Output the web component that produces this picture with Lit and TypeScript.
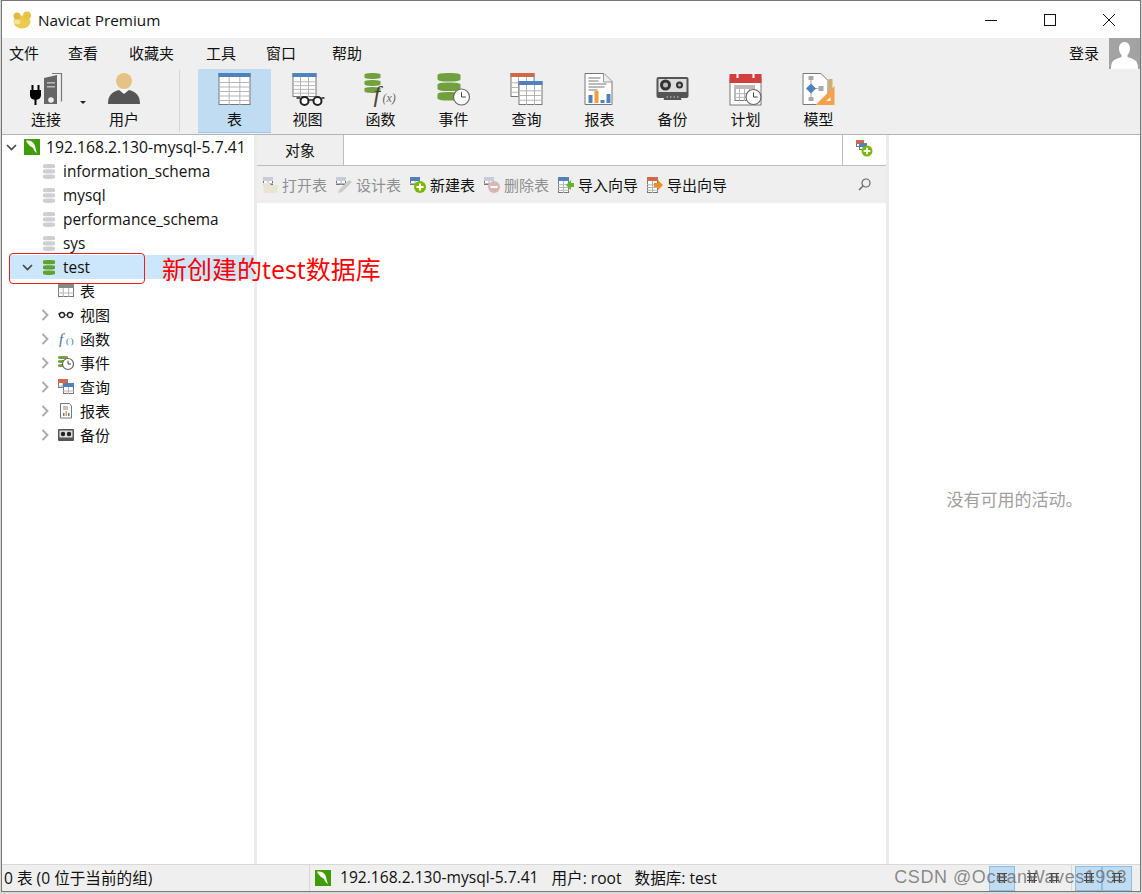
import { LitElement, html, css, svg } from "lit";
import { customElement } from "lit/decorators.js";

const gridTable = (x: number, y: number, w: number, h: number, head: string, cols: number, rows: number, sw = 1) => {
  const cw = w / cols, rh = (h - 5) / rows;
  const lines = [];
  for (let i = 1; i < cols; i++) lines.push(svg`<path d="M${x + cw * i} ${y}v${h}" stroke="#b5b5b5" stroke-width="1"/>`);
  for (let i = 1; i < rows; i++) lines.push(svg`<path d="M${x} ${y + 5 + rh * i}h${w}" stroke="#b5b5b5" stroke-width="1"/>`);
  return svg`<rect x="${x + .5}" y="${y + .5}" width="${w - 1}" height="${h - 1}" fill="#fff" stroke="#777" stroke-width="${sw}"/>${lines}<rect x="${x}" y="${y}" width="${w}" height="4" fill="${head}"/>`;
};
const dbStack = (x: number, y: number, w: number, hh: number, fill: string) => svg`
  <rect x="${x}" y="${y}" width="${w}" height="${hh}" rx="${w / 2.4}" ry="${hh * .24}" fill="${fill}"/>
  <rect x="${x}" y="${y + hh + 1}" width="${w}" height="${hh}" rx="${w / 2.4}" ry="${hh * .24}" fill="${fill}"/>
  <rect x="${x}" y="${y + 2 * hh + 2}" width="${w}" height="${hh}" rx="${w / 2.4}" ry="${hh * .24}" fill="${fill}"/>`;
const clock = (cx: number, cy: number, r: number) => svg`
  <circle cx="${cx}" cy="${cy}" r="${r}" fill="#fff" stroke="#666" stroke-width="1.2"/>
  <path d="M${cx} ${cy - r * .6}V${cy}h${r * .55}" fill="none" stroke="#444" stroke-width="1"/>`;
const greenPlus = (cx: number, cy: number, r: number) => svg`
  <circle cx="${cx}" cy="${cy}" r="${r}" fill="#7ab800"/>
  <path d="M${cx - r * .6} ${cy}h${r * 1.2}M${cx} ${cy - r * .6}v${r * 1.2}" stroke="#fff" stroke-width="${r * .35}"/>`;

const dolphin = html`<svg width="16" height="16" viewBox="0 0 16 16"><rect width="16" height="16" fill="#3f9c06"/><path d="M2 1.500c4-.5 7 1 8.500 4 1 2 1 5 2.500 8.500-2-1-3-3-4-5-1-1.500-2.500-1-3.500-2.500C4.500 5 3 4 2 1.500z" fill="#fff"/></svg>`;
const dbIcon = (c: string) => html`<svg width="14" height="16" viewBox="0 0 14 16">${dbStack(1, 1, 12, 4.300, c)}</svg>`;
const chevDown = html`<svg width="11" height="7"><path d="M1 1l4.500 4.500L10 1" fill="none" stroke="#444" stroke-width="1.600"/></svg>`;

const big: Record<string, unknown> = {
  conn: svg`<path d="M22 .5h9.500v28" fill="none" stroke="#777" stroke-width="1.200"/><path d="M14 5l13-3v29H14z" fill="#666"/><rect x="17" y="9" width="8" height="1.500" fill="#bbb"/><rect x="17" y="13" width="8" height="1.500" fill="#bbb"/><circle cx="21" cy="27" r="2.800" fill="#eee"/>
    <path d="M2.500 12v6M8.500 12v6" stroke="#000" stroke-width="2"/><path d="M0 17h11v5c0 3-2 4.500-4.500 4.800V32h-2v-5.200C2 26.500 0 25 0 22z" fill="#000"/>`,
  user: svg`<circle cx="16" cy="8" r="8" fill="#e6c384"/><path d="M0 31c0-9 4-12 11-14l5 4 5-4c7 2 11 5 11 14z" fill="#555"/><path d="M12 16l4 4 4-4z" fill="#fff"/>`,
  table: svg`${gridTable(0, 0, 32, 32, "#4f81bd", 3, 6)}`,
  view: svg`${gridTable(1, 0, 24, 24, "#4f81bd", 3, 5)}<path d="M5 25h4M30 25h3" stroke="#222" stroke-width="1.500"/><circle cx="13" cy="28" r="4" fill="#fff" stroke="#222" stroke-width="2"/><circle cx="26" cy="28" r="4" fill="#fff" stroke="#222" stroke-width="2"/><path d="M17 27h5" stroke="#222" stroke-width="1.500"/>`,
  func: svg`${dbStack(0, 0, 16, 6, "#72a03e")}<text x="9" y="29" font-family="Liberation Serif" font-style="italic" font-size="24" fill="#444">f</text><text x="18" y="29" font-family="Liberation Serif" font-style="italic" font-size="12" fill="#666">(x)</text>`,
  event: svg`${dbStack(0, 0, 23, 8.500, "#72a03e")}${clock(24, 24, 8)}`,
  query: svg`${gridTable(0, 0, 24, 24, "#d0694a", 3, 4)}${gridTable(8, 8, 24, 24, "#4f81bd", 3, 4)}`,
  report: svg`<path d="M1.500.5h19l8 8v23h-27z" fill="#fff" stroke="#777"/><path d="M20 .5v8.500h8.500" fill="#eee" stroke="#999"/><path d="M5 5h12M5 8h10M5 11h18M5 14h16M5 17h9" stroke="#777"/><rect x="5" y="22" width="4" height="8" fill="#4f81bd"/><rect x="11" y="18" width="4" height="12" fill="#f59c3c"/><rect x="17" y="27" width="4" height="3" fill="#4f81bd"/><rect x="23" y="21" width="4" height="9" fill="#4f81bd"/>`,
  backup: svg`<rect x="0" y="4" width="32" height="21" rx="2" fill="#555"/><rect x="2" y="6" width="28" height="13" fill="#ddd"/><circle cx="9" cy="12" r="5.500" fill="#333"/><circle cx="9" cy="12" r="2.500" fill="#bbb"/><circle cx="23" cy="12" r="3.500" fill="#333"/><circle cx="23" cy="12" r="1.500" fill="#bbb"/><path d="M7 27l2-7h14l2 7z" fill="#555"/><path d="M10 24h12" stroke="#ccc" stroke-dasharray="1.500 2"/>`,
  plan: svg`<rect x=".5" y="5" width="31" height="27" fill="#fff" stroke="#777"/><rect y="1" width="32" height="9" fill="#d13f3f"/><path d="M8 0v5M24 0v5" stroke="#fff" stroke-width="2"/>${gridTable(5, 12, 20, 16, "#bbb", 4, 3)}${clock(24, 24, 7.500)}`,
  model: svg`<path d="M.5.500h18l7 7V31.500H.500z" fill="#fff" stroke="#777"/><rect x="26" y="6" width="4" height="18" fill="#cfae75"/><rect x="6" y="3" width="5" height="4" fill="#aaa"/><rect x="6" y="24" width="5" height="4" fill="#aaa"/><rect x="16" y="13" width="5" height="5" fill="#aaa"/><path d="M8.500 7v17M12 15.500h4" stroke="#aaa"/><path d="M8.500 10.500l5 5-5 5-5-5z" fill="#4f81bd"/><path d="M32 13v19H13z" fill="#f5a04c"/><path d="M28 24v4h-4z" fill="#fff"/>`,
};

const sm: Record<string, unknown> = {
  table: svg`${gridTable(0, 1, 16, 13, "#888", 3, 2)}`,
  view: svg`<circle cx="4" cy="8" r="2.500" fill="#fff" stroke="#222" stroke-width="1.300"/><circle cx="12" cy="8" r="2.500" fill="#fff" stroke="#222" stroke-width="1.300"/><path d="M6.500 8h3M0 7h1.500M14.500 7H16" stroke="#222"/>`,
  func: svg`<text x="1" y="13" font-family="Liberation Serif" font-style="italic" font-size="15" fill="#3f6f9f">f</text><text x="8" y="13" font-family="Liberation Serif" font-size="9" letter-spacing="1.500" fill="#3f6f9f">()</text>`,
  event: svg`${dbStack(0, 1, 10, 3, "#72a03e")}${clock(10, 9, 5.500)}`,
  query: svg`${gridTable(0, 0, 10, 9, "#d0694a", 2, 2)}${gridTable(5, 4, 11, 11, "#4f81bd", 2, 2)}`,
  report: svg`<path d="M2.500.5h9l2 2.500v12h-11z" fill="#fff" stroke="#777"/><path d="M5 4h5M5 6h5" stroke="#888"/><rect x="5" y="10" width="1.500" height="3" fill="#4f81bd"/><rect x="7.500" y="8" width="1.500" height="5" fill="#f59c3c"/><rect x="10" y="10" width="1.500" height="3" fill="#4f81bd"/>`,
  backup: svg`<rect x="0" y="2" width="16" height="12" rx="1" fill="#555"/><rect x="1.500" y="3.500" width="13" height="7" fill="#ddd"/><circle cx="5" cy="7" r="2.200" fill="#222"/><circle cx="11" cy="7" r="2.200" fill="#222"/>`,
  open: svg`${gridTable(1, 0, 10, 8, "#c6cdd8", 2, 2)}<path d="M1 6h6l2 2h7l-1 8H2z" fill="#e9e4d3"/>`,
  design: svg`${gridTable(0, 0, 10, 8, "#c6cdd8", 2, 2)}<path d="M3 13L13 3l3 2L6 15l-4 1z" fill="#ccc"/>`,
  create: svg`${gridTable(0, 0, 10, 8, "#4f81bd", 2, 2)}${greenPlus(10, 10, 6)}`,
  del: svg`${gridTable(0, 0, 10, 8, "#c6cdd8", 2, 2)}<circle cx="10" cy="10" r="6" fill="#dcb5b5"/><path d="M6.500 10h7" stroke="#fff" stroke-width="2"/>`,
  imp: svg`${gridTable(0, 0, 11, 16, "#4f81bd", 2, 4)}<path d="M8 8l5-5v3h3v4h-3v3z" fill="#65b32e"/>`,
  exp: svg`${gridTable(0, 0, 11, 16, "#d0694a", 2, 4)}<path d="M16 8l-5-5v3H7v4h4v3z" fill="#f28c1e"/>`,
};

const gl = html`<svg width="12" height="12" viewBox="0 0 12 12"><path d="M1 1.500h10M1 5h10M1 8.500h10M3.500 1v10M8.500 1v10" stroke="#444" stroke-width="1.200" fill="none"/></svg>`;

const menus: [string, number][] = [["文件", 0], ["查看", 29], ["收藏夹", 31], ["工具", 32], ["窗口", 30], ["帮助", 36]];
const tools: [string, string, boolean?][] = [["表", "table", true], ["视图", "view"], ["函数", "func"], ["事件", "event"], ["查询", "query"], ["报表", "report"], ["备份", "backup"], ["计划", "plan"], ["模型", "model"]];
const objs: [string, string, boolean][] = [["打开表", "open", false], ["设计表", "design", false], ["新建表", "create", true], ["删除表", "del", false], ["导入向导", "imp", true], ["导出向导", "exp", true]];
const dbs = ["information_schema", "mysql", "performance_schema", "sys"];
const kids: [string, string, boolean][] = [["表", "table", false], ["视图", "view", true], ["函数", "func", true], ["事件", "event", true], ["查询", "query", true], ["报表", "report", true], ["备份", "backup", true]];

@customElement("app-root")
export class AppRoot extends LitElement {
  static styles = css`
    :host { display: block; width: 1142px; height: 894px; background: #d8d8d8; overflow: hidden; position: relative;
      font-family: "Open Sans", "Noto Sans CJK SC", sans-serif; color: #111; font-size: 15px; }
    .win { position: absolute; inset: 1px 2px 3px 2px; background: #fff; display: flex; flex-direction: column;
      box-shadow: 0 0 0 1px #777; }
    .title { height: 37px; display: flex; align-items: center; padding-left: 10px; flex: none; }
    .title span { margin-left: 6px; font-size: 15.300px; }
    .caps { margin-left: auto; margin-right: 2px; display: flex; }
    .cap { width: 59px; height: 37px; display: flex; align-items: center; justify-content: center; }
    .menu { height: 30px; flex: none; background: #efefef; display: flex; align-items: center; padding-left: 7px; position: relative; }
    .menu span { position: relative; top: -1px; }
    .menu .login { margin-left: auto; margin-right: 10px; }
    .avatar { width: 31px; height: 31px; background: #a3a3a3; overflow: hidden; align-self: flex-start; }
    .tb { height: 67px; flex: none; background: #efefef; border-bottom: 1px solid #b4b4b4; display: flex; padding: 1px 0 0 4px; box-sizing: border-box; }
    .tool { width: 73px; height: 64px; display: flex; flex-direction: column; align-items: center; padding-top: 4px; box-sizing: border-box; flex: none; }
    .tool.on { background: #bfdcf2; border-bottom: 1px solid #9cc8ea; }
    .tool svg { display: block; flex: none; overflow: visible; }
    .tool span { margin-top: 2px; line-height: 20px; }
    .tool.user { width: 76px; }
    .sep { width: 1px; height: 62px; background: #d6d6d6; margin: 1px 18px 0 17px; flex: none; }
    .tool.conn { position: relative; width: 80px; }
    .caret { position: absolute; left: 74px; top: 32px; width: 0; height: 0; border: 3px solid transparent; border-top: 3px solid #222; }
    .main { flex: 1; display: flex; min-height: 0; }
    .tree { width: 252px; flex: none; box-sizing: border-box; }
    .gap { width: 3px; background: #ececec; flex: none; }
    .row { height: 24px; display: flex; align-items: center; box-sizing: border-box; white-space: nowrap; font-size: 15.400px; }
    .arrow { width: 14px; flex: none; display: flex; justify-content: center; }
    .row.root { padding-left: 2px; font-size: 15.700px; }
    .row.root .dl { margin-left: 6px; display: flex; }
    .row.root .lbl { margin-left: 6px; }
    .row.db { padding-left: 40px; }
    .row.db .lbl, .row.sel .lbl { margin-left: 7px; }
    .row.sel { background: #cce6fb; margin-left: 7px; padding-left: 11px; }
    .row.sel svg.db { margin-left: 8px; }
    .row.kid { padding-left: 36px; font-size: 15px; }
    .row.kid .ic { margin-left: 6px; margin-right: 6px; display: block; }
    .row.kid .kl { position: relative; top: -1px; }
    .center { flex: 1; display: flex; flex-direction: column; min-width: 0; }
    .tabs { height: 31px; flex: none; display: flex; border-bottom: 1px solid #bdbdbd; box-sizing: border-box; }
    .tab { width: 87px; background: #efefef; border-right: 1px solid #bdbdbd; display: flex; align-items: center; justify-content: center; box-sizing: border-box; height: 30px; padding-bottom: 2px; }
    .tabs .fill { flex: 1; }
    .tabs .add { width: 44px; border-left: 1px solid #bdbdbd; display: flex; justify-content: center; padding-top: 5px; box-sizing: border-box; }
    .otb { height: 37px; flex: none; background: #efefef; display: flex; align-items: center; padding-left: 5px; }
    .ob { display: flex; align-items: center; gap: 4px; margin-right: 9px; color: #909090; white-space: nowrap; }
    .ob.en { color: #111; }
    .search { margin-left: auto; margin-right: 15px; display: block; }
    .blank { flex: 1; }
    .right { width: 251px; flex: none; border-left: 3px solid #ececec; display: flex; align-items: center; justify-content: center; color: #a0a0a0; font-size: 17px; box-sizing: content-box; padding-bottom: 2px; }
    .status { height: 27px; flex: none; background: #efefef; border-top: 1px solid #d8d8d8; box-sizing: border-box; display: flex; align-items: center; position: relative; font-size: 15.600px; }
    .st1 { width: 307px; padding: 0 0 2px 2px; box-sizing: border-box; flex: none; white-space: nowrap; }
    .st2 { display: flex; align-items: center; border-left: 1px solid #d8d8d8; height: 100%; padding-left: 5px; white-space: nowrap; width: 676px; box-sizing: border-box; flex: none; }
    .st2 svg { margin-right: 9px; }
    .st2 span { margin-right: 13px; position: relative; top: -1px; }
    .sb { height: 25px; border: 1px solid #8cbfe8; background: #bfdcf2; box-sizing: border-box; flex: none; display: flex; align-items: center; justify-content: center; }
    .sb.a { width: 26px; margin-left: 4px; }
    .sb.b { width: 27px; }
    .sb.c { width: 30px; }
    .sp { height: 100%; width: 57px; box-sizing: border-box; flex: none; border-right: 1px solid #d8d8d8; margin-right: 3px; display: flex; align-items: center; justify-content: space-evenly; }
    .mark { position: absolute; right: 13px; bottom: 3px; color: rgba(95,95,95,.72); font-size: 18px; white-space: nowrap; font-family: "Liberation Sans", sans-serif; letter-spacing: .55px; }
    .redbox { position: absolute; left: 9px; top: 253px; width: 136px; height: 31px; border: 1px solid #e8211c; border-radius: 4px; box-sizing: border-box; }
    .note { position: absolute; left: 162px; top: 254px; color: #f00; font-size: 25px; line-height: 30px; white-space: nowrap; }
  `;

  render() {
    return html`
      <div class="win">
        <div class="title">
          <svg width="20" height="18" viewBox="0 0 20 18"><ellipse cx="10" cy="11" rx="8.500" ry="6.500" fill="#ecc94f"/><circle cx="5" cy="5" r="3.500" fill="#e0b93e"/><circle cx="15" cy="4.500" r="4" fill="#e8c445"/><ellipse cx="5" cy="11" rx="3.500" ry="2.500" fill="#f4e39a"/></svg>
          <span>Navicat Premium</span>
          <div class="caps">
            <div class="cap"><svg width="12" height="12"><path d="M0 6.500h12" stroke="#111"/></svg></div>
            <div class="cap"><svg width="12" height="12"><rect x=".5" y=".5" width="11" height="11" fill="none" stroke="#111"/></svg></div>
            <div class="cap"><svg width="12" height="12"><path d="M0 0l12 12M12 0L0 12" stroke="#111"/></svg></div>
          </div>
        </div>
        <div class="menu">
          ${menus.map(([m, g]) => html`<span style="margin-left:${g}px">${m}</span>`)}
          <span class="login">登录</span>
          <div class="avatar"><svg width="31" height="31" viewBox="0 0 31 31"><path d="M15.500 4c3.500 0 5.500 3 5.500 6.500 0 2.500-1 5-2.500 6.500v2c3 1.500 9 2 10 7 .5 2 .5 5 .5 5H2s0-3 .5-5c1-5 7-5.500 10-7v-2c-1.500-1.500-2.500-4-2.500-6.500C10 7 12 4 15.500 4z" fill="#fff"/></svg></div>
        </div>
        <div class="tb">
          <div class="tool conn"><svg width="32" height="34" viewBox="0 0 32 34">${big.conn}</svg><span>连接</span><i class="caret"></i></div>
          <div class="tool user"><svg width="32" height="34" viewBox="0 0 32 34">${big.user}</svg><span>用户</span></div>
          <div class="sep"></div>
          ${tools.map(([t, k, on]) => html`<div class="tool ${on ? "on" : ""}"><svg width="34" height="34" viewBox="-.5 0 34 34">${big[k]}</svg><span>${t}</span></div>`)}
        </div>
        <div class="main">
          <div class="tree">
            <div class="row root"><span class="arrow">${chevDown}</span><span class="dl">${dolphin}</span><span class="lbl">192.168.2.130-mysql-5.7.41</span></div>
            ${dbs.map(d => html`<div class="row db">${dbIcon("#cfcfcf")}<span class="lbl">${d}</span></div>`)}
            <div class="row sel"><span class="arrow">${chevDown}</span><svg class="db" width="14" height="16" viewBox="0 0 14 16">${dbStack(1, 1, 12, 4.300, "#5da32e")}</svg><span class="lbl">test</span></div>
            ${kids.map(([t, k, a]) => html`<div class="row kid"><span class="arrow">${a ? html`<svg width="8" height="12"><path d="M1.500 1l5 5-5 5" fill="none" stroke="#a8a8a8" stroke-width="1.800"/></svg>` : ""}</span><svg class="ic" width="16" height="16" viewBox="0 0 16 16">${sm[k]}</svg><span class="kl">${t}</span></div>`)}
          </div>
          <div class="gap"></div>
          <div class="center">
            <div class="tabs">
              <div class="tab">对象</div>
              <div class="fill"></div>
              <div class="add"><svg width="18" height="18" viewBox="0 0 18 18">${gridTable(0, 0, 8, 7, "#d0694a", 2, 1)}${gridTable(3, 3, 8, 7, "#4f81bd", 2, 1)}${greenPlus(11, 11, 5.500)}</svg></div>
            </div>
            <div class="otb">
              ${objs.map(([t, k, en]) => html`<div class="ob ${en ? "en" : ""}"><svg width="16" height="16" viewBox="0 0 16 16">${sm[k]}</svg><span>${t}</span></div>`)}
              <svg class="search" width="13" height="13" viewBox="0 0 13 13"><circle cx="8" cy="5" r="4" fill="none" stroke="#666" stroke-width="1.200"/><path d="M5 8l-4 4" stroke="#666" stroke-width="1.400"/></svg>
            </div>
            <div class="blank"></div>
          </div>
          <div class="right">没有可用的活动。</div>
        </div>
        <div class="status">
          <div class="st1">0 表 (0 位于当前的组)</div>
          <div class="st2">${dolphin}<span>192.168.2.130-mysql-5.7.41</span><span>用户: root</span><span>数据库: test</span></div>
          <div class="sb a">${gl}</div>
          <div class="sp">${gl}${gl}</div>
          <div class="sb b">${gl}</div>
          <div class="sb c">${gl}</div>
        </div>
        <div class="mark">CSDN @OceanWaves1993</div>
      </div>
      <div class="redbox"></div>
      <div class="note">新创建的test数据库</div>
    `;
  }
}
